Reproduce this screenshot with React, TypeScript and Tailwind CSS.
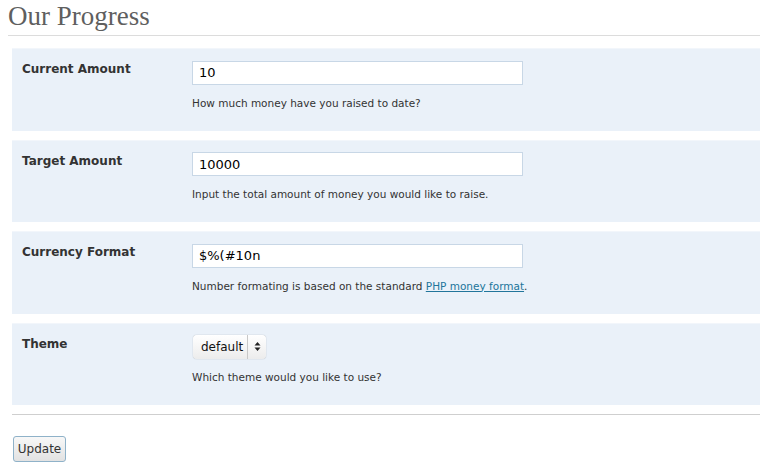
const rows = [
  { label: "Current Amount", value: "10", help: "How much money have you raised to date?" },
  { label: "Target Amount", value: "10000", help: "Input the total amount of money you would like to raise." },
  { label: "Currency Format", value: "$%(#10n", help: null },
];

function Panel({ label, children }: { label: string; children: React.ReactNode }) {
  return (
    <div className="flex h-[82.5px] border-t border-[#f2f6fb] bg-[#eaf1f9]">
      <div className="w-[180px] pl-[10px] pt-[11px] text-[12px] font-bold text-[#333]">{label}</div>
      <div className="pt-[11px]">{children}</div>
    </div>
  );
}

export default function App() {
  return (
    <div className="min-h-[469px] w-[773px] bg-white font-['DejaVu_Sans',sans-serif]">
      <div className="px-2 pt-[2px]">
        <h1 className="font-['Liberation_Serif',serif] text-[27px] leading-[29px] text-[#5f5f5f]">Our Progress</h1>
        <div className="mt-[4px] mr-[5px] h-px bg-[#dcdcdc]" />
      </div>

      <div className="ml-[12px] mr-[13px] mt-[12px] flex flex-col gap-[9px]">
        {rows.map((r) => (
          <Panel key={r.label} label={r.label}>
            <input
              readOnly
              value={r.value}
              className="h-[24px] w-[331px] border border-[#c8d7e6] bg-white px-[6px] text-[13px] text-black outline-none"
            />
            <p className="mt-[11px] text-[10.5px] text-[#333]">
              {r.help ?? (
                <>
                  Number formating is based on the standard{" "}
                  <a href="#" className="text-[#21759b] underline">PHP money format</a>.
                </>
              )}
            </p>
          </Panel>
        ))}
        <Panel label="Theme">
          <div className="ml-px flex h-[24px] w-[73px] items-center rounded-[4px] bg-gradient-to-b from-white to-[#ececec] text-[12px] text-[#111] shadow-[0_0_1px_rgba(0,0,0,0.4)]">
            <span className="flex-1 pl-[8px]">default</span>
            <span className="flex h-full w-[19px] items-center justify-center border-l border-[#c8c8c8]">
              <svg width="7" height="11" viewBox="0 0 7 11">
                <path d="M3.5 1 L6.5 4.5 H0.5 Z M3.5 10 L6.5 6.5 H0.5 Z" fill="#222" />
              </svg>
            </span>
          </div>
          <p className="mt-[11px] text-[10.5px] text-[#333]">Which theme would you like to use?</p>
        </Panel>
      </div>

      <div className="ml-[12px] mr-[13px] mt-[9px] h-px bg-[#cfcfcf]" />

      <div className="ml-[13px] mt-[21px]">
        <button className="h-[26px] w-[53px] rounded-[3px] border border-[#8fb2c9] bg-gradient-to-b from-[#f8f8f8] to-[#e2e2e2] text-[12px] text-[#333]">
          Update
        </button>
      </div>
    </div>
  );
}
